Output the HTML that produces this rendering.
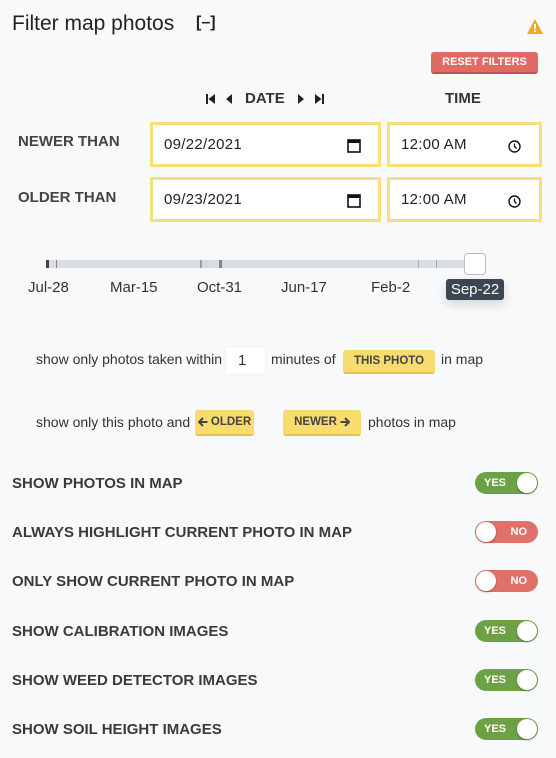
<!DOCTYPE html>
<html><head><style>
*{box-sizing:border-box;margin:0;padding:0}
body{width:556px;height:758px;background:#f8f9fb;font-family:"Liberation Sans",sans-serif;color:#333;position:relative;overflow:hidden}
.a{position:absolute}
.inp{position:absolute;border:3px solid #f8df7a;background:#fff;font-size:15px;color:#222;padding-left:11px;display:flex;align-items:center;letter-spacing:0.3px}
.lbl{position:absolute;font-weight:bold;font-size:15px;color:#444;left:18px}
.tl{position:absolute;font-size:15px;color:#333;top:279px}
.btn{position:absolute;background:#f8dc6e;border-bottom:2px solid #e8c24a;border-radius:3px;font-size:11.5px;font-weight:bold;color:#444;display:flex;align-items:center;justify-content:center;white-space:nowrap}
.row{position:absolute;left:12px;font-weight:bold;font-size:15px;color:#3a3a3a}
.tg{position:absolute;left:475px;width:63px;height:22px;border-radius:11px;color:#fff;font-weight:bold;font-size:11px;line-height:22px}
.tg .k{position:absolute;top:1px;width:20px;height:20px;border-radius:50%;background:#fff;box-shadow:0 1px 2px rgba(0,0,0,.3)}
.yes{background:#6ca245}.yes .k{right:1px}.yes span{position:absolute;left:9px;top:0}
.no{background:#e0706a}.no .k{left:1px}.no span{position:absolute;right:11px;top:0}
.sm{position:absolute;font-size:14px;color:#333;white-space:nowrap}
</style></head><body>
<div class="a" style="left:12px;top:12px;font-size:21px;color:#222">Filter map photos</div>
<div class="a" style="left:196px;top:14px;font-size:16px;font-weight:bold;color:#222">[–]</div>
<svg class="a" style="left:527px;top:19px" width="16" height="15" viewBox="0 0 16 15"><path d="M8 0L16 15H0Z" fill="#f5a623"/><rect x="7" y="5" width="2" height="5" fill="#fff"/><rect x="7" y="11" width="2" height="2" fill="#fff"/></svg>
<div class="a" style="left:431px;top:52px;width:107px;height:22px;background:#e06a64;border-bottom:2px solid #c9504a;border-radius:3px;color:#fff;font-size:11px;font-weight:bold;display:flex;align-items:center;justify-content:center">RESET FILTERS</div>
<svg class="a" style="left:206px;top:93px" width="30" height="12" viewBox="0 0 30 12"><rect x="0" y="1" width="2" height="10" fill="#222"/><path d="M9 1V11L2.5 6Z" fill="#222"/><path d="M26 1V11L20 6Z" fill="#222"/></svg>
<div class="a" style="left:245px;top:90px;font-size:15px;font-weight:bold;color:#333">DATE</div>
<svg class="a" style="left:295px;top:93px" width="30" height="12" viewBox="0 0 30 12"><path d="M3 1V11L9 6Z" fill="#222"/><path d="M20 1V11L26.5 6Z" fill="#222"/><rect x="27" y="1" width="2" height="10" fill="#222"/></svg>
<div class="a" style="left:445px;top:90px;font-size:15px;font-weight:bold;color:#333">TIME</div>
<div class="lbl" style="top:133px">NEWER THAN</div>
<div class="lbl" style="top:189px">OLDER THAN</div>
<div class="inp" style="left:150px;top:122px;width:231px;height:45px">09/22/2021<svg style="position:absolute;right:17px;top:13px" width="14" height="15"><rect x="1" y="2" width="12" height="12" fill="none" stroke="#111" stroke-width="1.6"/><rect x="1" y="2" width="12" height="3" fill="#111"/></svg></div>
<div class="inp" style="left:387px;top:122px;width:155px;height:45px">12:00 AM<svg style="position:absolute;right:18px;top:15px" width="13" height="13"><circle cx="6.5" cy="6.5" r="5.5" fill="none" stroke="#111" stroke-width="1.4"/><path d="M6.5 3.5V6.5L8.5 8.5" stroke="#111" stroke-width="1.3" fill="none"/></svg></div>
<div class="inp" style="left:150px;top:177px;width:231px;height:45px">09/23/2021<svg style="position:absolute;right:17px;top:13px" width="14" height="15"><rect x="1" y="2" width="12" height="12" fill="none" stroke="#111" stroke-width="1.6"/><rect x="1" y="2" width="12" height="3" fill="#111"/></svg></div>
<div class="inp" style="left:387px;top:177px;width:155px;height:45px">12:00 AM<svg style="position:absolute;right:18px;top:15px" width="13" height="13"><circle cx="6.5" cy="6.5" r="5.5" fill="none" stroke="#111" stroke-width="1.4"/><path d="M6.5 3.5V6.5L8.5 8.5" stroke="#111" stroke-width="1.3" fill="none"/></svg></div>
<div class="a" style="left:46px;top:260px;width:428px;height:8px;background:#d9dde1;border-radius:4px"></div>
<div class="a" style="left:46px;top:260px;width:3px;height:8px;background:#444"></div>
<div class="a" style="left:56px;top:260px;width:1px;height:8px;background:#888"></div>
<div class="a" style="left:200px;top:260px;width:2px;height:8px;background:#999"></div>
<div class="a" style="left:219px;top:260px;width:3px;height:8px;background:#888"></div>
<div class="a" style="left:418px;top:260px;width:1px;height:8px;background:#aaa"></div>
<div class="a" style="left:436px;top:260px;width:1px;height:8px;background:#aaa"></div>
<div class="a" style="left:464px;top:253px;width:22px;height:22px;background:#fff;border:1px solid #bbb;border-radius:4px"></div>
<div class="tl" style="left:28px">Jul-28</div>
<div class="tl" style="left:110px">Mar-15</div>
<div class="tl" style="left:197px">Oct-31</div>
<div class="tl" style="left:281px">Jun-17</div>
<div class="tl" style="left:371px">Feb-2</div>
<div class="a" style="left:446px;top:279px;width:58px;height:21px;background:#3b4653;border-radius:3px;color:#fff;font-size:15px;text-align:center;line-height:21px;box-shadow:0 4px 10px rgba(0,0,0,.15)">Sep-22</div>
<div class="sm" style="left:36px;top:351px">show only photos taken within</div>
<div class="a" style="left:226px;top:348px;width:39px;height:26px;background:#fff;font-size:15px;padding:4px 12px;box-shadow:0 0 3px rgba(0,0,0,.06)">1</div>
<div class="sm" style="left:271px;top:351px">minutes of</div>
<div class="btn" style="left:343px;top:350px;width:92px;height:24px">THIS PHOTO</div>
<div class="sm" style="left:441px;top:351px">in map</div>
<div class="sm" style="left:36px;top:414px">show only this photo and</div>
<div class="btn" style="left:195px;top:410px;width:59px;height:26px"><svg width="10" height="10" viewBox="0 0 10 10" style="margin-right:3px"><path d="M5 1L1 5L5 9M1 5H9.5" stroke="#444" stroke-width="2" fill="none"/></svg>OLDER</div>
<div class="btn" style="left:283px;top:410px;width:78px;height:26px">NEWER<svg width="10" height="10" viewBox="0 0 10 10" style="margin-left:3px"><path d="M5 1L9 5L5 9M9 5H0.5" stroke="#444" stroke-width="2" fill="none"/></svg></div>
<div class="sm" style="left:368px;top:414px">photos in map</div>
<div class="row" style="top:475px">SHOW PHOTOS IN MAP</div>
<div class="tg yes" style="top:472px"><span>YES</span><div class="k"></div></div>
<div class="row" style="top:524px">ALWAYS HIGHLIGHT CURRENT PHOTO IN MAP</div>
<div class="tg no" style="top:521px"><span>NO</span><div class="k"></div></div>
<div class="row" style="top:573px">ONLY SHOW CURRENT PHOTO IN MAP</div>
<div class="tg no" style="top:570px"><span>NO</span><div class="k"></div></div>
<div class="row" style="top:623px">SHOW CALIBRATION IMAGES</div>
<div class="tg yes" style="top:620px"><span>YES</span><div class="k"></div></div>
<div class="row" style="top:672px">SHOW WEED DETECTOR IMAGES</div>
<div class="tg yes" style="top:669px"><span>YES</span><div class="k"></div></div>
<div class="row" style="top:721px">SHOW SOIL HEIGHT IMAGES</div>
<div class="tg yes" style="top:718px"><span>YES</span><div class="k"></div></div>
</body></html>
